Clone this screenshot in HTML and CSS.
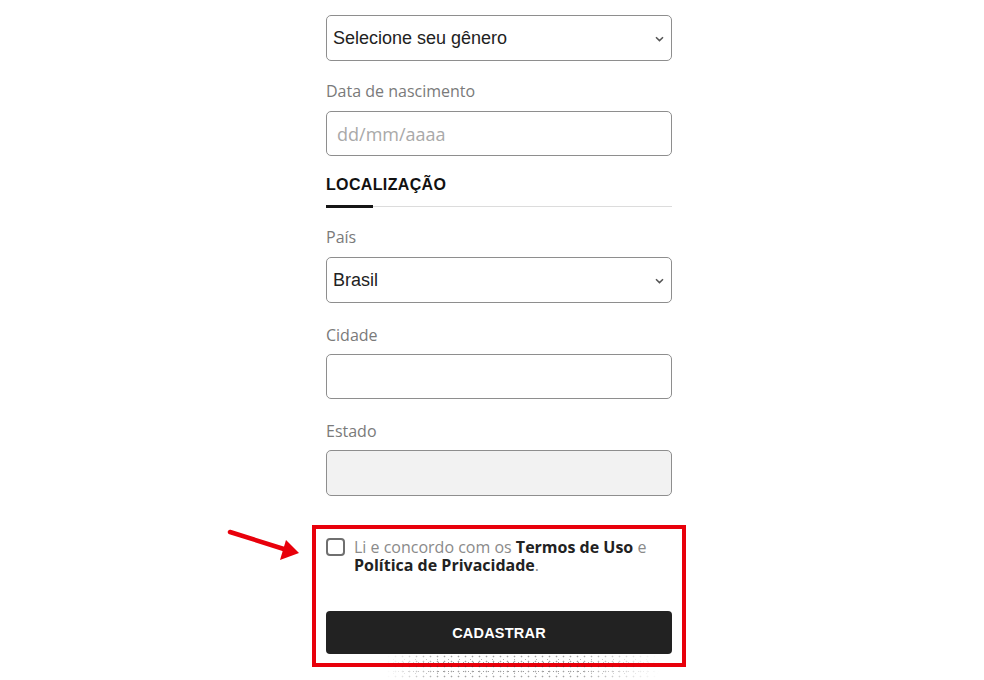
FILE: index.html
```html
<!DOCTYPE html>
<html lang="pt-BR">
<head>
<meta charset="utf-8">
<title>Cadastro</title>
<link rel="stylesheet" href="styles.css">
</head>
<body>
<main class="page">
  <form class="form">
    <div class="control select">
      <span>Selecione seu gênero</span>
      <svg class="chevron" width="9" height="6" viewBox="0 0 9 6"><path d="M1 1.2 L4.5 4.6 L8 1.2" fill="none" stroke="#555" stroke-width="1.5"/></svg>
    </div>

    <div class="field">
      <label class="label">Data de nascimento</label>
      <div class="control input placeholder">dd/mm/aaaa</div>
    </div>

    <div class="section">
      <h2 class="section-title">LOCALIZAÇÃO</h2>
      <div class="rule"><span class="rule-active"></span><span class="rule-rest"></span></div>
    </div>

    <div class="field field-first">
      <label class="label">País</label>
      <div class="control select">
        <span>Brasil</span>
        <svg class="chevron" width="9" height="6" viewBox="0 0 9 6"><path d="M1 1.2 L4.5 4.6 L8 1.2" fill="none" stroke="#555" stroke-width="1.5"/></svg>
      </div>
    </div>

    <div class="field field-wide">
      <label class="label">Cidade</label>
      <div class="control input"></div>
    </div>

    <div class="field field-wide">
      <label class="label">Estado</label>
      <div class="control input disabled"></div>
    </div>

    <div class="highlight">
      <div class="terms">
        <span class="checkbox"></span>
        <p class="terms-text">Li e concordo com os <b>Termos de Uso</b> e<br><b>Política de Privacidade</b>.</p>
      </div>
      <button type="button" class="submit">CADASTRAR</button>
    </div>
  </form>

  <svg class="arrow" width="80" height="40" viewBox="0 0 80 40">
    <line x1="5" y1="7" x2="62" y2="25" stroke="#e8000b" stroke-width="4.5" stroke-linecap="round"/>
    <polygon points="61,15 74,28 55,35" fill="#e8000b"/>
  </svg>
  <div class="speckle"></div>
</main>
</body>
</html>
```

FILE: styles.css
```css
* { box-sizing: border-box; }

html, body {
  margin: 0;
  padding: 0;
  background: #ffffff;
}

body {
  font-family: "Open Sans", "Liberation Sans", sans-serif;
  color: #222;
}

.page {
  position: relative;
  width: 984px;
  height: 680px;
  overflow: hidden;
}

.form {
  width: 346px;
  margin-left: 326px;
  padding-top: 15px;
  display: flex;
  flex-direction: column;
}

.control {
  display: flex;
  align-items: center;
  width: 100%;
  height: 45px;
  border: 1.5px solid #8e8e8e;
  border-radius: 5px;
  background: #fff;
}

.select {
  height: 46px;
  justify-content: space-between;
  padding: 0 7px 0 6px;
  font-family: "Liberation Sans", Arial, sans-serif;
  font-size: 18px;
  color: #222;
}

.chevron { display: block; margin-top: 1px; }

.input {
  padding: 0 10px;
  font-family: "Open Sans", sans-serif;
  font-size: 18px;
}

.placeholder { color: #a9a9a9; }

.disabled {
  height: 46px;
  background: #f2f2f2;
}

.field {
  display: flex;
  flex-direction: column;
  margin-top: 20px;
}

.field-first { margin-top: 19px; }
.field-wide { margin-top: 22px; }
.field-wide .label { margin-bottom: 9px; }

.label {
  font-size: 16px;
  line-height: 20px;
  color: #7a7a7a;
  margin-bottom: 10px;
}

.section {
  margin-top: 19px;
}

.section-title {
  margin: 0 0 10px;
  font-family: "Liberation Sans", Arial, sans-serif;
  font-weight: 700;
  font-size: 16px;
  line-height: 20px;
  letter-spacing: 0.35px;
  color: #111;
}

.rule {
  display: flex;
  align-items: center;
  height: 3px;
}

.rule-active {
  width: 47px;
  height: 3px;
  background: #151515;
}

.rule-rest {
  flex: 1;
  height: 1px;
  background: #dcdcdc;
}

.highlight {
  margin: 29px -14px 0;
  border: 4px solid #e8000b;
  padding: 9px 10px 9px;
  display: flex;
  flex-direction: column;
}

.terms {
  display: flex;
  align-items: flex-start;
  gap: 9px;
}

.checkbox {
  flex: none;
  width: 19px;
  height: 18px;
  border: 2px solid #6f6f6f;
  border-radius: 4px;
}

.terms-text {
  margin: 0;
  font-size: 16px;
  line-height: 18px;
  color: #8a8a8a;
}

.terms-text b {
  color: #222;
  font-weight: 700;
}

.submit {
  margin-top: 37px;
  height: 43px;
  width: 100%;
  border: 0;
  border-radius: 4px;
  background: #222222;
  color: #fff;
  font-family: "Liberation Sans", Arial, sans-serif;
  font-weight: 700;
  font-size: 14.5px;
  letter-spacing: 0.2px;
}

.arrow {
  position: absolute;
  left: 225px;
  top: 525px;
}

.speckle {
  position: absolute;
  left: 385px;
  top: 654px;
  width: 275px;
  height: 26px;
  opacity: 0.45;
  background-image:
    radial-gradient(circle, #333 0.7px, transparent 1.1px),
    radial-gradient(circle, #555 0.6px, transparent 1px),
    radial-gradient(circle, #222 0.6px, transparent 1px);
  background-size: 7px 5px, 11px 7px, 5px 9px;
  background-position: 0 0, 3px 2px, 1px 4px;
  -webkit-mask-image: linear-gradient(90deg, transparent 0%, #000 20%, #000 70%, transparent 100%);
  mask-image: linear-gradient(90deg, transparent 0%, #000 20%, #000 70%, transparent 100%);
}
```
